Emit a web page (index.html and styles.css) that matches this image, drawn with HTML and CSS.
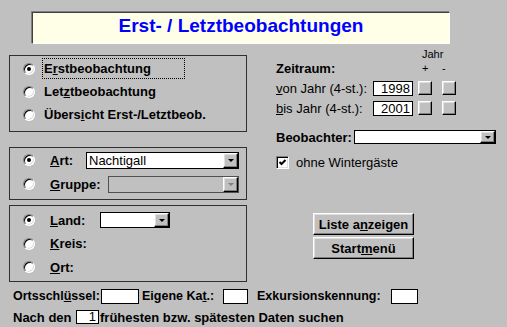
FILE: index.html
```html
<!DOCTYPE html>
<html lang="de">
<head>
<meta charset="utf-8">
<title>Erst- / Letztbeobachtungen</title>
<link rel="stylesheet" href="styles.css">
</head>
<body>
<div class="title">Erst- / Letztbeobachtungen</div>

<div class="main">
  <div class="left">
    <div class="frame f1">
      <div class="opt"><span class="radio checked"></span><span class="lbl focus">E<u>r</u>stbeobachtung</span></div>
      <div class="opt"><span class="radio"></span><span class="lbl">Let<u>z</u>tbeobachtung</span></div>
      <div class="opt"><span class="radio"></span><span class="lbl">Übers<u>i</u>cht Erst-/Letztbeob.</span></div>
    </div>
    <div class="frame f2">
      <div class="opt opt24"><span class="radio wide checked"></span><span class="lbl2 w-art"><u>A</u>rt:</span><span class="combo c-art"><span class="val">Nachtigall</span><span class="arrow"></span></span></div>
      <div class="opt opt24"><span class="radio wide"></span><span class="lbl2 w-grp"><u>G</u>ruppe:</span><span class="combo c-grp disabled"><span class="val"></span><span class="arrow"></span></span></div>
    </div>
    <div class="frame f3">
      <div class="opt opt24"><span class="radio wide checked"></span><span class="lbl2 w-land"><u>L</u>and:</span><span class="combo c-land"><span class="val"></span><span class="arrow"></span></span></div>
      <div class="opt"><span class="radio wide"></span><span class="lbl2"><u>K</u>reis:</span></div>
      <div class="opt opt24"><span class="radio wide"></span><span class="lbl2"><u>O</u>rt:</span></div>
    </div>
  </div>

  <div class="right">
    <div class="jahr-head">Jahr</div>
    <div class="zeit-row"><span class="zeit">Zeitraum:</span><span class="pm">+</span><span class="pm">-</span></div>
    <div class="year-row"><span class="ylabel"><u>v</u>on Jahr (4-st.):</span><span class="field year">1998</span><span class="sbtn first"></span><span class="sbtn"></span></div>
    <div class="year-row second"><span class="ylabel"><u>b</u>is Jahr (4-st.):</span><span class="field year">2001</span><span class="sbtn first"></span><span class="sbtn"></span></div>
    <div class="beo-row"><span class="blabel">Beobachter:</span><span class="combo c-beo"><span class="val"></span><span class="arrow"></span></span></div>
    <div class="check-row"><span class="check"><svg width="9" height="9" viewBox="0 0 9 9"><polyline points="1.5,4 3.5,6 7.5,2" fill="none" stroke="#000" stroke-width="2"/></svg></span><span class="ctext">ohne Wintergäste</span></div>
    <div class="buttons">
      <button class="btn">Liste a<u>n</u>zeigen</button>
      <button class="btn">Start<u>m</u>enü</button>
    </div>
  </div>
</div>

<div class="brow r1">
  <span class="l-orts">Ortsschl<u>ü</u>ssel:</span><span class="field f-orts"></span>
  <span class="l-kat">Eigene Ka<u>t</u>.:</span><span class="field f-kat"></span>
  <span class="l-exk">Exkursionskennung:</span><span class="field f-exk"></span>
</div>
<div class="brow r2">
  <span class="l-nach">Nach den</span><span class="field f-nach">1</span><span class="l-rest">frühesten bzw. spätesten Daten suchen</span>
</div>
</body>
</html>
```
FILE: styles.css
```css
* { box-sizing: border-box; }
html, body { margin: 0; padding: 0; }
body {
  background: #c0c0c0;
  width: 507px;
  height: 327px;
  overflow: hidden;
  font-family: "Liberation Sans", Arial, sans-serif;
  font-size: 13px;
  color: #000;
}
u { text-decoration: underline; }

.title {
  margin: 12px 0 0 32px;
  width: 418px;
  height: 32px;
  background: #ffffe8;
  border: 1px solid;
  border-color: #404040 #ffffff #ffffff #404040;
  box-shadow: -1px -1px 0 #808080;
  display: flex;
  align-items: center;
  justify-content: center;
  padding-bottom: 4px;
  font-weight: bold;
  font-size: 19px;
  color: #0000ff;
}

.main { display: flex; margin-top: 3px; }

.left { margin-left: 9px; width: 238px; padding-top: 8px; }

.frame {
  border: 1px solid #303030;
  display: flex;
  flex-direction: column;
  padding-left: 13px;
}
.f1 { height: 77px; padding-top: 1px; }
.f2 { height: 53px; margin-top: 15px; }
.f3 { height: 77px; margin-top: 5px; padding-top: 2px; }

.opt { display: flex; align-items: center; height: 23px; font-weight: bold; white-space: nowrap; }
.opt24 { height: 24px; }

.radio {
  position: relative;
  width: 12px;
  height: 12px;
  flex: none;
  border-radius: 50%;
  background: #fff;
  border: 1px solid;
  border-color: #808080 #ffffff #ffffff #808080;
  box-shadow: inset 1px 1px 0 #000, inset -1px -1px 0 #dfdfdf;
  margin-right: 7px;
}
.radio.wide { margin-right: 15px; }
.radio.checked::after {
  content: "";
  position: absolute;
  left: 3px;
  top: 3px;
  width: 4px;
  height: 4px;
  border-radius: 50%;
  background: #000;
}

.lbl { display: flex; align-items: center; height: 21px; padding-left: 2px; }
.focus { width: 143px; outline: 1px dotted #000; outline-offset: -1px; }

.lbl2 { display: inline-block; }
.w-art { width: 36px; }
.w-grp { width: 58px; }
.w-land { width: 50px; }

.combo {
  display: flex;
  background: #fff;
  border: 1px solid #000;
  font-weight: normal;
}
.combo .val { flex: 1; padding-left: 2px; display: flex; align-items: center; }
.combo .arrow {
  width: 15px;
  flex: none;
  background: #c0c0c0;
  border: 1px solid;
  border-color: #ffffff #000000 #000000 #ffffff;
  box-shadow: inset -1px -1px 0 #808080, inset 1px 1px 0 #dfdfdf;
  display: flex;
  align-items: center;
  justify-content: center;
}
.combo .arrow::after {
  content: "";
  border-left: 3px solid transparent;
  border-right: 3px solid transparent;
  border-top: 3px solid #000;
}
.combo.disabled { background: #c0c0c0; border-color: #505050; }
.combo.disabled .arrow::after { border-top-color: #808080; }

.c-art { width: 153px; height: 17px; }
.c-grp { width: 131px; height: 17px; }
.c-land { width: 70px; height: 16px; }
.c-beo { width: 145px; height: 14px; }

.right { margin-left: 29px; width: 220px; }
.jahr-head { height: 15px; line-height: 15px; padding-left: 146px; font-size: 11px; }
.zeit-row { display: flex; align-items: center; height: 12px; }
.zeit { width: 146px; font-weight: bold; }
.pm { width: 20px; font-size: 11px; }

.year-row { display: flex; align-items: center; height: 15px; margin-top: 7px; }
.year-row.second { margin-top: 5px; }
.ylabel { width: 97px; }

.field {
  display: inline-block;
  background: #fff;
  border: 1px solid #000;
  height: 15px;
  flex: none;
}
.year { width: 40px; text-align: right; padding-right: 2px; line-height: 13px; }

.sbtn {
  width: 14px;
  height: 14px;
  margin-left: 10px;
  align-self: flex-start;
  background: #c0c0c0;
  border: 1px solid;
  border-color: #ffffff #000000 #000000 #ffffff;
  box-shadow: inset -1px -1px 0 #808080, inset 1px 1px 0 #dfdfdf;
}
.sbtn.first { margin-left: 5px; }

.beo-row { display: flex; align-items: center; height: 14px; margin-top: 14px; }
.blabel { width: 80px; font-weight: bold; }

.check-row { display: flex; align-items: center; height: 13px; margin-top: 12px; }
.check {
  width: 13px;
  height: 13px;
  background: #fff;
  border: 1px solid;
  border-color: #808080 #ffffff #ffffff #808080;
  box-shadow: inset 1px 1px 0 #000, inset -1px -1px 0 #dfdfdf;
  display: flex;
  align-items: center;
  justify-content: center;
  margin-right: 7px;
}
.check svg { display: block; }

.buttons { display: flex; flex-direction: column; gap: 2px; margin-top: 44px; margin-left: 37px; }
.btn {
  width: 101px;
  height: 22px;
  padding: 0;
  background: #c0c0c0;
  border: 1px solid;
  border-color: #ffffff #000000 #000000 #ffffff;
  box-shadow: inset -1px -1px 0 #808080, inset 1px 1px 0 #dfdfdf;
  font-family: inherit;
  font-size: 13px;
  font-weight: bold;
  color: #000;
  display: flex;
  align-items: center;
  justify-content: center;
}

.brow { display: flex; align-items: center; height: 18px; padding-left: 13px; font-weight: bold; white-space: nowrap; }
.r1 { margin-top: 5px; font-size: 12.5px; }
.r2 { margin-top: 3px; }
.l-orts { width: 88px; }
.f-orts { width: 38px; }
.l-kat { width: 81px; margin-left: 3px; }
.f-kat { width: 25px; }
.l-exk { width: 134px; margin-left: 9px; }
.f-exk { width: 27px; }
.l-nach { width: 63px; }
.f-nach { width: 23px; height: 14px; text-align: right; padding-right: 2px; line-height: 12px; font-weight: normal; }
.l-rest { margin-left: 1px; }
```
